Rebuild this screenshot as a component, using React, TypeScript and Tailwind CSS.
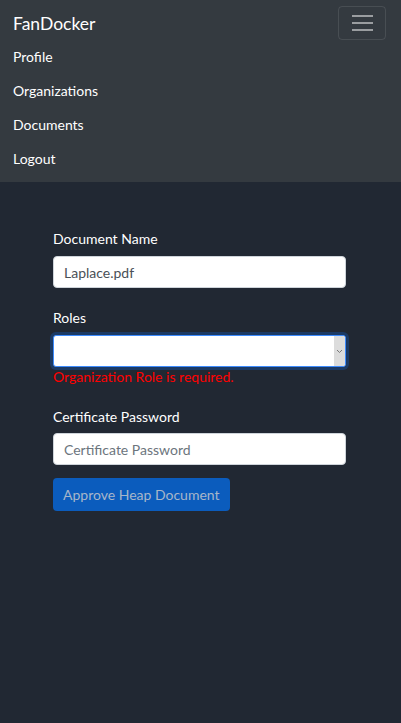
export default function App() {
    return (
        <div className="min-h-[723px] bg-[#212833] text-[14px] text-white" style={{ fontFamily: 'Lato, "Noto Sans", sans-serif' }}>
            <nav className="bg-[#343a40] px-[13px] pb-[7px] pt-[6px]">
                <div className="flex items-start justify-between">
                    <span className="mt-[6px] text-[17.5px] leading-[24px]">FanDocker</span>
                    <button className="mr-[2px] flex h-[34px] w-[48px] flex-col items-center justify-center gap-[5px] rounded-[4px] border border-white/10">
                        <span className="block h-[2px] w-[21px] bg-[#9a9da0]" />
                        <span className="block h-[2px] w-[21px] bg-[#9a9da0]" />
                        <span className="block h-[2px] w-[21px] bg-[#9a9da0]" />
                    </button>
                </div>
                <ul className="-mt-[1px] flex flex-col">
                    <li className="flex h-[34px] items-center">Profile</li>
                    <li className="flex h-[34px] items-center">Organizations</li>
                    <li className="flex h-[34px] items-center">Documents</li>
                    <li className="flex h-[34px] items-center">Logout</li>
                </ul>
            </nav>

            <form className="pl-[53px] pr-[55px] pt-[47px]">
                <div className="mb-[20px]">
                    <label className="mb-[7px] block leading-[20px]">Document Name</label>
                    <input
                        className="h-[32px] w-full rounded-[4px] border border-[#ced4da] bg-white px-[10px] text-[14px] text-[#495057] outline-none"
                        defaultValue="Laplace.pdf"
                    />
                </div>
                <div className="mb-[20px]">
                    <label className="mb-[7px] block leading-[20px]">Roles</label>
                    <div className="flex h-[32px] w-full overflow-hidden rounded-[3px] border border-[#3d8bfd] bg-white shadow-[0_0_0_3px_rgba(13,110,253,0.25)]">
                        <div className="flex-1" />
                        <div className="flex w-[11px] items-center justify-center bg-[#dcdcdc]">
                            <svg width="7" height="5" viewBox="0 0 7 5">
                                <path d="M1 1 L3.5 3.5 L6 1" fill="none" stroke="#777" strokeWidth="1" />
                            </svg>
                        </div>
                    </div>
                    <div className="leading-[20px] text-[#ff0000]">Organization Role is required.</div>
                </div>
                <div className="mb-[13px]">
                    <label className="mb-[6px] block leading-[20px]">Certificate Password</label>
                    <input
                        type="password"
                        className="h-[32px] w-full rounded-[4px] border border-[#ced4da] bg-white px-[10px] text-[14px] text-[#495057] outline-none placeholder:text-[#6c757d]"
                        placeholder="Certificate Password"
                    />
                </div>
                <button
                    type="button"
                    className="h-[33px] rounded-[4px] bg-[#0b5cbd] px-[10px] text-[14px] text-[#a7b6c9]"
                >
                    Approve Heap Document
                </button>
            </form>
        </div>
    );
}
